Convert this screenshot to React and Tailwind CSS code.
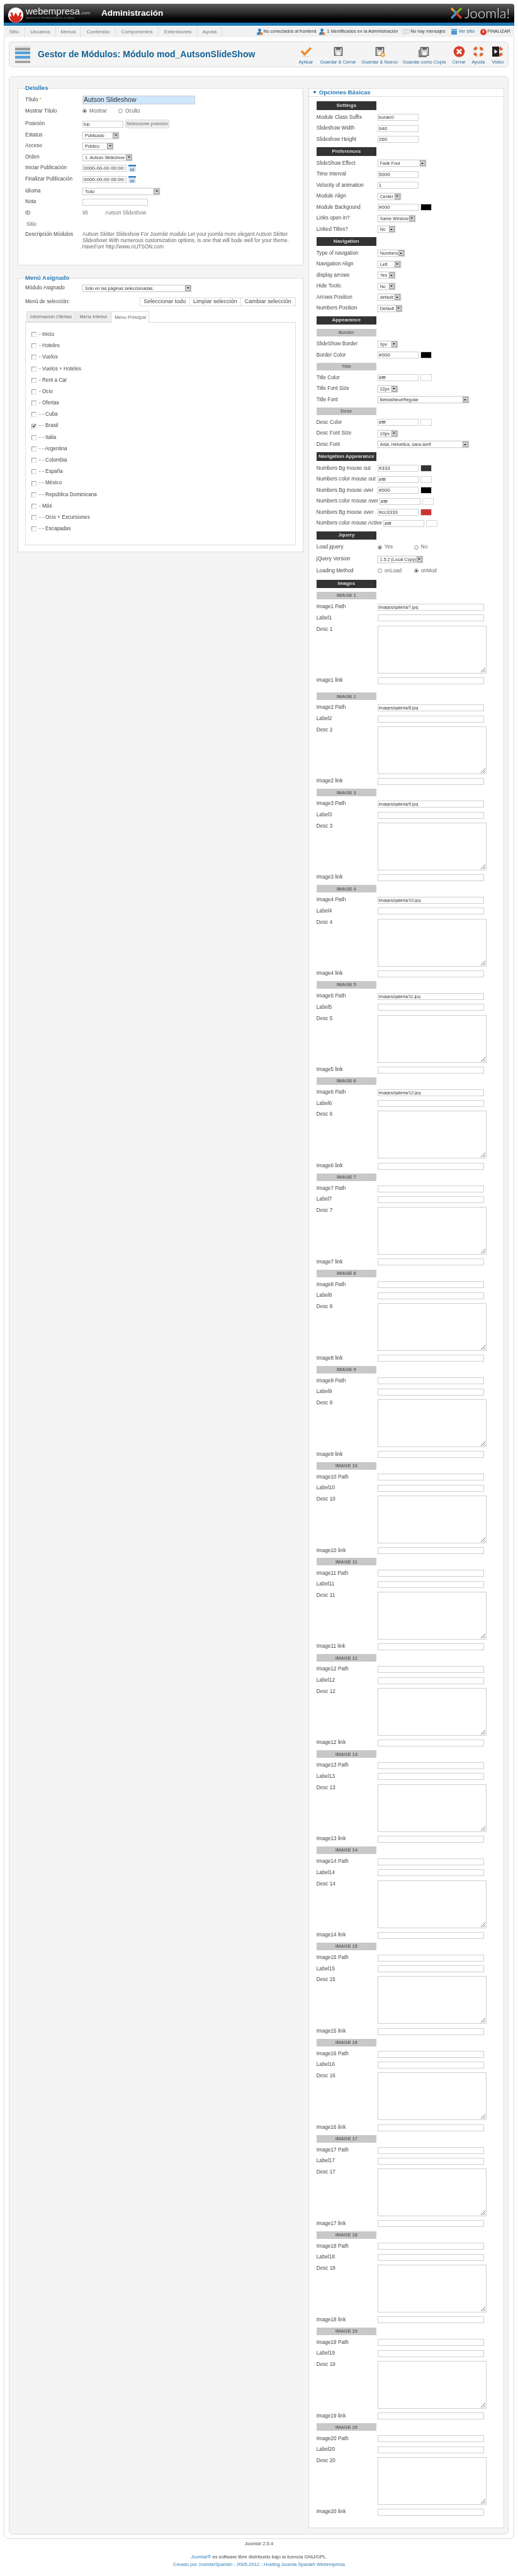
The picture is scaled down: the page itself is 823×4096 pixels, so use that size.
import React from 'react';

const font = { fontFamily: '"Liberation Sans", Arial, sans-serif' };

function Person({ color = '#2f7fc1' }) {
    return (
        <svg width="11" height="11" viewBox="0 0 11 11" className="shrink-0">
            <circle cx="5.5" cy="3" r="2.4" fill={color} />
            <path d="M1 10.5 C1 6.5 3 5.5 5.5 5.5 C8 5.5 10 6.5 10 10.5 Z" fill={color} />
            <path d="M5.5 7 L10.5 7 L10.5 10.5 L5.5 10.5 Z" fill="#e8873a" />
        </svg>
    );
}

function Floppy({ plus, copy }) {
    return (
        <svg width="18" height="17" viewBox="0 0 18 17">
            {copy && <path d="M1 5 V16 H13" fill="none" stroke="#777" strokeWidth="2" />}
            <path d="M3.5 1.5 H15.5 V14 H3.5 Z" fill="#e4e4e4" stroke="#555" strokeWidth="1.6" />
            <path d="M6 1.5 H13 V5.5 H6 Z" fill="#666" />
            <path d="M6 8 H13 V14 H6 Z" fill="#f5f5f5" stroke="#999" strokeWidth=".6" />
            {plus && <circle cx="14" cy="13" r="3.6" fill="#eb9a35" />}
            {plus && <path d="M14 11 V15 M12 13 H16" stroke="#fff" strokeWidth="1.1" />}
        </svg>
    );
}

function Buoy({ size = 18 }) {
    return (
        <svg width={size} height={size} viewBox="0 0 18 18">
            <circle cx="9" cy="9" r="6.6" fill="none" stroke="#e8e8e8" strokeWidth="4.4" />
            <circle cx="9" cy="9" r="6.6" fill="none" stroke="#e0632b" strokeWidth="4.4" strokeDasharray="5.2 5.17" strokeDashoffset="-2.6" />
        </svg>
    );
}

function ToolIcon({ kind }) {
    if (kind === 'check') {
        return (
            <svg width="19" height="17" viewBox="0 0 19 17">
                <path d="M2 7 L7 12.5 L17 2" fill="none" stroke="#ec8d2c" strokeWidth="3.4" />
                <path d="M3 15.5 H14" stroke="#ddd" strokeWidth="1.5" />
            </svg>
        );
    }
    if (kind === 'save') return <Floppy />;
    if (kind === 'new') return <Floppy plus />;
    if (kind === 'copy') return <Floppy copy />;
    if (kind === 'close') {
        return (
            <svg width="19" height="18" viewBox="0 0 19 18">
                <circle cx="9.5" cy="9" r="8.8" fill="#d9402a" />
                <path d="M6 5.5 L13 12.5 M13 5.5 L6 12.5" stroke="#fff" strokeWidth="2.8" />
            </svg>
        );
    }
    if (kind === 'help') return <Buoy />;
    return (
        <div className="relative h-[18px] w-[18px]">
            <Buoy />
            <svg width="11" height="16" viewBox="0 0 11 16" className="absolute left-0 top-[1px]">
                <rect width="11" height="16" fill="#222" />
                <path d="M3.5 4.5 L8.5 8 L3.5 11.5 Z" fill="#fff" />
            </svg>
        </div>
    );
}

function Tool({ kind, label, className }) {
    return (
        <div className={`flex flex-col items-center ${className}`}>
            <div className="flex h-[19px] items-center justify-center">
                <ToolIcon kind={kind} />
            </div>
            <span className="mt-[2px] whitespace-nowrap text-[7.4px] leading-[10px] text-[#2a6a9e]">{label}</span>
        </div>
    );
}

function Txt({ value = '', className = 'w-[65px]', big }) {
    return (
        <input
            readOnly
            defaultValue={value}
            className={`h-[11px] border border-[#cfcfcf] bg-white px-[1px] leading-none text-[#333] ${big ? 'text-[8px]' : 'text-[7px]'} ${className}`}
        />
    );
}

function Sel({ value, className }) {
    return (
        <div className={`flex h-[11px] items-stretch justify-between border border-[#d5d5d5] bg-white pl-[3px] shadow-[0_0_0_1px_#eeeeee] ${className}`}>
            <span className="whitespace-nowrap text-[7px] leading-[9px] text-[#333]">{value}</span>
            <span className="flex w-[9px] shrink-0 items-center justify-center border border-[#999] bg-[#d6d3cc]">
                <span className="h-0 w-0 border-x-[2px] border-t-[2px] border-x-transparent border-t-black" />
            </span>
        </div>
    );
}

function Radio({ on, label, className }) {
    return (
        <span className={`flex items-center gap-[4px] ${className}`}>
            <span className="flex h-[7px] w-[7px] items-center justify-center rounded-full border border-[#888] bg-white">
                {on && <span className="h-[3px] w-[3px] rounded-full bg-[#333]" />}
            </span>
            <span className="text-[8.2px] text-[#666]">{label}</span>
        </span>
    );
}

function Calendar() {
    return (
        <svg width="12" height="11" viewBox="0 0 12 11" className="ml-[3px]">
            <rect width="12" height="11" fill="#dbe8f5" />
            <rect width="12" height="2.5" fill="#2f7fc1" />
            <text x="6" y="9.5" textAnchor="middle" fontSize="6" fontWeight="bold" fill="#1f5f94">23</text>
        </svg>
    );
}

function LRow({ label, children, className = 'h-[18px]' }) {
    return (
        <div className={`flex items-center ${className}`}>
            <span className="w-[91px] shrink-0 whitespace-nowrap text-[8.2px] text-[#444]">{label}</span>
            {children}
        </div>
    );
}

function Row({ label, children, labelClass = 'w-[97px]', className = 'h-[17.5px]' }) {
    return (
        <div className={`flex items-center ${className}`}>
            <span className={`shrink-0 whitespace-nowrap text-[8.2px] text-[#444] ${labelClass}`}>{label}</span>
            {children}
        </div>
    );
}

function Bar({ children }) {
    return (
        <div className="mb-[3.5px] mt-[3.5px] flex h-[13.5px] w-[95px] items-center justify-center bg-[#333] text-[8px] font-bold text-[#ddd]">
            {children}
        </div>
    );
}

function Sub({ children, className = 'mt-[7px] mb-[3.5px]' }) {
    return (
        <div className={`flex h-[12px] w-[95px] items-center justify-center bg-[#c8c8c8] text-[7.5px] font-bold text-[#666] ${className}`}>
            {children}
        </div>
    );
}

function Swatch({ className }) {
    return <span className={`ml-[3px] h-[11px] w-[18px] border border-[#d5d5d5] ${className}`} />;
}

function ImageBlock({ n, path }) {
    return (
        <div>
            <Sub className={n === 1 ? 'mb-[3.5px] mt-[6px]' : n === 2 ? 'mb-[3.5px] mt-[10.5px]' : 'mb-[3.5px] mt-[3px]'}>IMAGE {n}</Sub>
            <Row label={`Image${n} Path`}><Txt value={path} className="w-[169px]" /></Row>
            <Row label={`Label${n}`}><Txt className="w-[169px]" /></Row>
            <div className="flex h-[81.9px] items-start">
                <span className="w-[97px] shrink-0 pt-[3px] text-[8.2px] text-[#444]">Desc {n}</span>
                <textarea readOnly className="mt-[3px] h-[76px] w-[173px] border border-[#cfcfcf] bg-white" />
            </div>
            <Row label={`Image${n} link`}><Txt className="w-[169px]" /></Row>
        </div>
    );
}

const paths = ['images/galeria/7.jpg', 'images/galeria/8.jpg', 'images/galeria/9.jpg', 'images/galeria/10.jpg', 'images/galeria/11.jpg', 'images/galeria/12.jpg'];
const images = Array.from({ length: 20 }, (_, i) => ({ n: i + 1, path: paths[i] || '' }));

const menuItems = [
    ['- Inicio'], ['- Hoteles'], ['- Vuelos'], ['- Vuelos + Hoteles'], ['- Rent a Car'], ['- Ocio'], ['- Ofertas'], ['- - Cuba'],
    ['- - Brasil', true], ['- - Italia'], ['- - Argentina'], ['- - Colombia'], ['- - España'], ['- - México'],
    ['- - Republica Dominicana'], ['- Más'], ['- - Ocio + Excursiones'], ['- - Escapadas'],
];

const topMenu = [
    ['Sitio', 'w-[34px]'], ['Usuarios', 'w-[49px]'], ['Menús', 'w-[40px]'], ['Contenido', 'w-[55px]'],
    ['Componentes', 'w-[68px]'], ['Extensiones', 'w-[62px]'], ['Ayuda', 'w-[39px]'],
];

export default function App() {
    return (
        <div style={font} className="h-[4096px] w-[823px] overflow-hidden bg-white pt-[6px] text-[#333] blur-[0.3px]">
            {/* header */}
            <div className="mx-[6px] flex h-[30px] items-center justify-between overflow-hidden rounded-t-[4px] bg-gradient-to-b from-[#5c5c5c] via-[#2a2a2a] to-black">
                <div className="flex items-center">
                    <svg width="24" height="26" viewBox="0 0 24 26" className="ml-[7px] mt-[5px]">
                        <circle cx="12" cy="13" r="12" fill="#fff" />
                        <path d="M2 15 H22 C21 21 17 25 12 25 C7 25 3 21 2 15 Z" fill="#d7261e" />
                        <path d="M5 9 L8 19 L12 12 L16 19 L20 9" fill="none" stroke="#d7261e" strokeWidth="3" />
                    </svg>
                    <div className="ml-[4px] flex w-[116px] flex-col">
                        <div className="flex items-baseline text-[#eee]">
                            <span className="text-[15px] leading-[16px]">webempresa</span>
                            <span className="text-[7.5px] text-[#bbb]">.com</span>
                        </div>
                        <span className="whitespace-nowrap text-[3.5px] leading-[6px] tracking-[0.4px] text-[#888]">SERVICIOS PROFESIONALES JOOMLA</span>
                    </div>
                    <span className="ml-[4px] text-[13.5px] font-bold text-white">Administración</span>
                </div>
                <div className="mr-[7px] flex items-center">
                    <svg width="22" height="24" viewBox="0 0 22 24">
                        <path d="M3 4 L11 12 L7 16" fill="none" stroke="#f0a030" strokeWidth="3.2" />
                        <path d="M19 4 L11 12 L15 8" fill="none" stroke="#7ab800" strokeWidth="3.2" />
                        <path d="M3 20 L11 12 L7 8" fill="none" stroke="#5091cd" strokeWidth="3.2" />
                        <path d="M19 20 L11 12 L15 16" fill="none" stroke="#e03c31" strokeWidth="3.2" />
                    </svg>
                    <span style={{ fontFamily: 'Lato, sans-serif' }} className="ml-[2px] text-[22px] font-light leading-none text-[#eee]">Joomla!</span>
                </div>
            </div>
            <div className="mx-[6px] h-[5px] bg-[#1a77b5]" />
            <div className="mx-[6px] mt-[1px] flex h-[17px] items-stretch justify-between bg-[#f1f1f1]">
                <div className="flex">
                    {topMenu.map(([t, w]) => (
                        <span key={t} className={`flex items-center justify-center border-r border-[#ddd] text-[8px] text-[#777] ${w}`}>{t}</span>
                    ))}
                </div>
                <div className="flex items-center pr-[6px] text-[7.2px] text-[#333]">
                    <Person />
                    <span className="ml-[1px] whitespace-nowrap">No conectados al frontend</span>
                    <span className="ml-[4px]"><Person /></span>
                    <span className="ml-[2px] whitespace-nowrap">1 Identificados en la Administración</span>
                    <svg width="10" height="9" viewBox="0 0 10 9" className="ml-[8px]">
                        <path d="M0 1 H10 V7 H4 L2 9 V7 H0 Z" fill="#e4eaf0" stroke="#aaa" strokeWidth=".5" />
                    </svg>
                    <span className="ml-[2px] whitespace-nowrap">No hay mensajes</span>
                    <svg width="9" height="9" viewBox="0 0 9 9" className="ml-[9px]">
                        <rect width="9" height="9" fill="#4d97d4" />
                        <rect y="1.5" width="9" height="1" fill="#cfe4f5" />
                    </svg>
                    <span className="ml-[3px] whitespace-nowrap text-[#2a6a9e]">Ver sitio</span>
                    <svg width="10" height="10" viewBox="0 0 10 10" className="ml-[9px]">
                        <circle cx="5" cy="5" r="5" fill="#d9402a" />
                        <path d="M5 2 V6" stroke="#fff" strokeWidth="1.4" />
                    </svg>
                    <span className="ml-[1px] whitespace-nowrap">FINALIZAR</span>
                </div>
            </div>

            {/* frame */}
            <div className="mx-[6px] h-[3978px] rounded-b-[8px] border-x border-b border-[#ddd] bg-white pl-[7px] pr-[8px] pt-[7px]">
                {/* toolbar */}
                <div className="flex h-[41px] items-center justify-between rounded-[5px] border border-[#ddd] bg-[#f4f4f4]">
                    <div className="flex items-center">
                        <svg width="24" height="28" viewBox="0 0 24 28" className="ml-[9px]">
                            <rect width="24" height="28" rx="1" fill="#e2e2e2" />
                            <rect y="3" width="24" height="4" fill="#9a9a9a" />
                            <rect y="9" width="24" height="4" fill="#4ea0dc" />
                            <rect y="16" width="24" height="4" fill="#4ea0dc" />
                            <rect y="24" width="24" height="3" fill="#9a9a9a" />
                        </svg>
                        <h1 className="ml-[12px] whitespace-nowrap text-[14px] font-bold text-[#146295]">Gestor de Módulos: Módulo mod_AutsonSlideShow</h1>
                    </div>
                    <div className="flex h-[30px] items-start pr-[5px] pt-[1px]">
                        <Tool kind="check" label="Aplicar" className="w-[30px]" />
                        <Tool kind="save" label="Guardar & Cerrar" className="ml-[8px] w-[56px]" />
                        <Tool kind="new" label="Guardar & Nuevo" className="ml-[10px] w-[56px]" />
                        <Tool kind="copy" label="Guardar como Copia" className="ml-[10px] w-[66px]" />
                        <Tool kind="close" label="Cerrar" className="ml-[10px] w-[24px]" />
                        <Tool kind="help" label="Ayuda" className="ml-[7px] w-[24px]" />
                        <Tool kind="video" label="Video" className="ml-[8px] w-[22px]" />
                    </div>
                </div>

                {/* panel */}
                <div className="mt-[14px] flex h-[3909px] rounded-[6px] border border-[#ddd] bg-[#f4f4f4] pl-[13px] pr-[6px]">
                    <div className="w-[455px] pt-[13px]">
                        <fieldset className="h-[287px] border border-[#ddd] bg-white px-[11px]">
                            <legend className="text-[9.5px] font-bold leading-[10px] text-[#2a7ab5]">Detalles</legend>
                            <div className="pt-[5px]">
                                <LRow label={<>Título <span className="text-[#e8a040]">*</span></>}>
                                    <input readOnly defaultValue="Autson Slideshow" className="h-[14px] w-[179px] border border-[#cfcfcf] bg-[#cfe7fb] pl-[1px] text-[10.5px] text-[#333]" />
                                </LRow>
                                <LRow label="Mostrar Título">
                                    <Radio on label="Mostrar" className="w-[57px]" />
                                    <Radio label="Oculto" />
                                </LRow>
                                <LRow label="Posición" className="h-[22px]">
                                    <Txt value="top" className="w-[65px]" />
                                    <span className="ml-[3px] flex h-[14px] w-[70px] items-center justify-center rounded-[2px] border border-[#ddd] bg-[#eeeeee] text-[7.5px] text-[#666]">Seleccione posicion</span>
                                </LRow>
                                <LRow label="Estatus" className="h-[14px]"><Sel value="Publicado" className="w-[58px]" /></LRow>
                                <LRow label="Acceso" className="h-[20px]"><Sel value="Público" className="w-[49px]" /></LRow>
                                <LRow label="Orden" className="h-[16px]"><Sel value="1. Autson Slideshow" className="w-[79px]" /></LRow>
                                <LRow label="Iniciar Publicación">
                                    <Txt value="0000-00-00 00:00:00" className="w-[70px]" big />
                                    <Calendar />
                                </LRow>
                                <LRow label="Finalizar Publicación">
                                    <Txt value="0000-00-00 00:00:00" className="w-[70px]" big />
                                    <Calendar />
                                </LRow>
                                <LRow label="Idioma" className="h-[20px]"><Sel value="Todo" className="w-[123px]" /></LRow>
                                <LRow label="Nota" className="h-[14px]"><Txt className="w-[104px]" /></LRow>
                                <LRow label="ID" className="h-[22px]">
                                    <span className="w-[36px] text-[8.2px] text-[#777]">95</span>
                                    <span className="text-[8.2px] text-[#777]">Autson Slideshow</span>
                                </LRow>
                                <div className="flex h-[14px] items-center pl-[2px] text-[8.2px] text-[#666]">Sitio</div>
                                <div className="mt-[4px] flex">
                                    <span className="w-[91px] shrink-0 whitespace-nowrap text-[8.2px] leading-[10px] text-[#444]">Descripción Módulos</span>
                                    <div className="whitespace-nowrap text-[8.2px] leading-[9.8px] text-[#666]">
                                        <p>Autson Skitter Slideshow For Joomla! module Let your joomla more elegant Autson Skitter</p>
                                        <p>Slideshow! With numerous customization options, is one that will bode well for your theme.</p>
                                        <p className="-ml-[3px]">.HaveFun! http://www.AUTSON.com</p>
                                    </div>
                                </div>
                            </div>
                        </fieldset>

                        <fieldset className="mt-[15px] h-[441px] border border-[#ddd] bg-white px-[11px]">
                            <legend className="text-[9.5px] font-bold leading-[10px] text-[#2a7ab5]">Menú Asignado</legend>
                            <div className="pt-[5px]">
                                <LRow label="Módulo Asignado" className="h-[12px]">
                                    <Sel value="Sólo en las páginas seleccionadas." className="w-[173px]" />
                                </LRow>
                                <div className="mt-[9px] flex h-[14px] items-center justify-between">
                                    <span className="text-[8.2px] text-[#444]">Menú de selección:</span>
                                    <div className="flex h-[14px] border border-[#ddd] text-[9px] text-[#444]">
                                        <span className="flex w-[79px] items-center justify-center border-r border-[#ddd]">Seleccionar todo</span>
                                        <span className="flex w-[81px] items-center justify-center border-r border-[#ddd]">Limpiar selección</span>
                                        <span className="flex w-[86px] items-center justify-center">Cambiar selección</span>
                                    </div>
                                </div>
                                <div className="mt-[8px] flex h-[17px] items-stretch gap-[1px] pl-[2px]">
                                    <span className="flex w-[78px] items-center justify-center border border-[#ddd] bg-[#eeeeee] text-[7.5px] text-[#666]">Información Ofertas</span>
                                    <span className="flex w-[55px] items-center justify-center border border-[#ddd] bg-[#eeeeee] text-[7.5px] text-[#666]">Menú inferior</span>
                                    <span className="z-10 -mb-[1px] flex w-[60px] items-center justify-center border border-b-0 border-[#ddd] bg-white text-[7.5px] text-[#666]">Menu Principal</span>
                                </div>
                                <div className="h-[355px] border border-[#ddd] bg-white pl-[9px] pt-[10px]">
                                    {menuItems.map(([t, on]) => (
                                        <div key={t} className="flex h-[18.2px] items-center">
                                            <span className="flex h-[8px] w-[8px] items-center justify-center border border-[#999] border-b-[#ddd] border-r-[#ddd] bg-white">
                                                {on && (
                                                    <svg width="7" height="7" viewBox="0 0 7 7">
                                                        <path d="M1 3 L3 5.5 L6 1" fill="none" stroke="#222" strokeWidth="1.4" />
                                                    </svg>
                                                )}
                                            </span>
                                            <span className="ml-[4px] text-[8.2px] text-[#444]">{t}</span>
                                        </div>
                                    ))}
                                </div>
                            </div>
                        </fieldset>
                    </div>

                    <div className="ml-[8px] w-[312px] pt-[18px]">
                        <div className="h-[3880px] border border-[#ddd] bg-white">
                            <div className="flex h-[13px] items-center border-b border-[#ddd] pl-[6px]">
                                <span className="h-0 w-0 border-x-[3px] border-t-[4px] border-x-transparent border-t-[#2a7ab5]" />
                                <span className="ml-[4px] text-[9.5px] font-bold text-[#2a7ab5]">Opciones Básicas</span>
                            </div>
                            <div className="pl-[12px] pt-[3.5px]">
                                <Bar>Settings</Bar>
                                <Row label="Module Class Suffix"><Txt value="border0" /></Row>
                                <Row label="Slideshow Width"><Txt value="940" big /></Row>
                                <Row label="Slideshow Height"><Txt value="260" big /></Row>
                                <Bar>Preferences</Bar>
                                <Row label="SlideShow Effect"><Sel value="Fade Four" className="w-[77px]" /></Row>
                                <Row label="Time Interval"><Txt value="5000" big /></Row>
                                <Row label="Velocity of animation"><Txt value="1" big /></Row>
                                <Row label="Module Align"><Sel value="Center" className="w-[37px]" /></Row>
                                <Row label="Module Backgound"><Txt value="#000" big /><Swatch className="bg-black" /></Row>
                                <Row label="Links open in?"><Sel value="Same Window" className="w-[60px]" /></Row>
                                <Row label="Linked Titles?"><Sel value="No" className="w-[28px]" /></Row>
                                <Bar>Navigation</Bar>
                                <Row label="Type of navigation"><Sel value="Numbers" className="w-[43px]" /></Row>
                                <Row label="Navigation Align"><Sel value="Left" className="w-[37px]" /></Row>
                                <Row label="display arrows"><Sel value="Yes" className="w-[28px]" /></Row>
                                <Row label="Hide Tools:"><Sel value="No" className="w-[28px]" /></Row>
                                <Row label="Arrows Position"><Sel value="default" className="w-[37px]" /></Row>
                                <Row label="Numbers Position"><Sel value="Default" className="w-[39px]" /></Row>
                                <Bar>Appearance</Bar>
                                <Sub>Border</Sub>
                                <Row label="SlideShow Border"><Sel value="0px" className="w-[32px]" /></Row>
                                <Row label="Border Color"><Txt value="#000" big /><Swatch className="bg-black" /></Row>
                                <Sub className="mb-[3px] mt-[3.5px]">Title</Sub>
                                <Row label="Title Color"><Txt value="#fff" big /><Swatch className="bg-white" /></Row>
                                <Row label="Title Font Size"><Sel value="22px" className="w-[32px]" /></Row>
                                <Row label="Title Font"><Sel value="BebasNeueRegular" className="w-[145px]" /></Row>
                                <Sub className="mb-[3px] mt-[3.5px]">Desc</Sub>
                                <Row label="Desc Color"><Txt value="#fff" big /><Swatch className="bg-white" /></Row>
                                <Row label="Desc Font Size"><Sel value="10px" className="w-[32px]" /></Row>
                                <Row label="Desc Font"><Sel value="Arial, Helvetica, sans-serif" className="w-[145px]" /></Row>
                                <Bar>Navigation Appearance</Bar>
                                <Row label="Numbers Bg mouse out"><Txt value="#333" big /><Swatch className="bg-[#333]" /></Row>
                                <Row label="Numbers color mouse out"><Txt value="#fff" big /><Swatch className="bg-white" /></Row>
                                <Row label="Numbers Bg mouse over"><Txt value="#000" big /><Swatch className="bg-black" /></Row>
                                <Row label="Numbers color mouse over" labelClass="w-[100px]"><Txt value="#fff" big /><Swatch className="bg-white" /></Row>
                                <Row label="Numbers Bg mouse over"><Txt value="#cc3333" big /><Swatch className="bg-[#cc3333]" /></Row>
                                <Row label="Numbers color mouse Active" labelClass="w-[106px]"><Txt value="#fff" big /><Swatch className="bg-white" /></Row>
                                <Bar>Jquery</Bar>
                                <Row label="Load jquery" className="h-[18px]">
                                    <Radio on label="Yes" className="w-[58px]" />
                                    <Radio label="No" />
                                </Row>
                                <Row label="jQuery Version" className="h-[19.5px]"><Sel value="1.5.2 (Local Copy)" className="w-[72px]" /></Row>
                                <Row label="Loading Method">
                                    <Radio label="onLoad" className="w-[58px]" />
                                    <Radio on label="onMod" />
                                </Row>
                                <div className="pt-[1.5px]"><Bar>Images</Bar></div>
                                {images.map((im) => <ImageBlock key={im.n} n={im.n} path={im.path} />)}
                            </div>
                        </div>
                    </div>
                </div>
            </div>

            {/* footer */}
            <div className="pt-[3px] text-center text-[7.6px] text-[#444]">
                <p className="leading-[10px]">Joomla! 2.5.4</p>
                <p className="mt-[10px] leading-[12px]"><span className="text-[#2a7ab5]">Joomla!®</span> es software libre distribuido bajo la licencia GNU/GPL.</p>
                <p className="leading-[12px] text-[#2a7ab5]">Creado por Joomla!Spanish - 2005-2012 - Hosting Joomla Spanish Webempresa</p>
            </div>
        </div>
    );
}
